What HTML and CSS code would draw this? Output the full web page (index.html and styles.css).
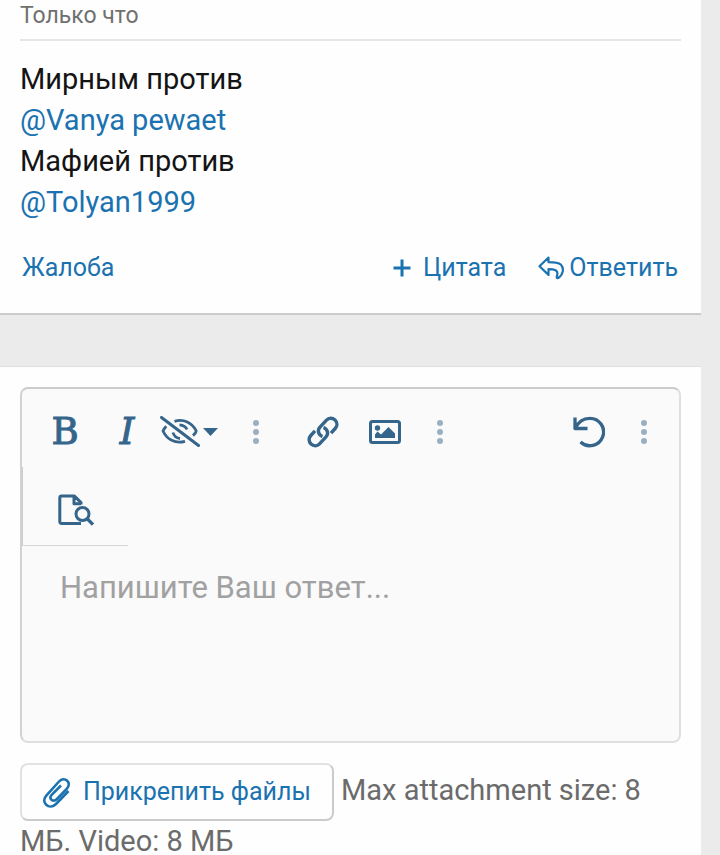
FILE: index.html
```
<!DOCTYPE html>
<html lang="ru">
<head>
  <meta charset="UTF-8">
  <meta name="viewport" content="width=device-width, initial-scale=1">
  <title>Форум</title>
  <link rel="stylesheet" href="styles.css">
</head>
<body>
  <article class="block post">
    <header class="post-meta"><time>Только что</time></header>
    <div class="post-text">
      Мирным против<br>
      <a href="#">@Vanya pewaet</a><br>
      Мафией против<br>
      <a href="#">@Tolyan1999</a>
    </div>
    <footer class="post-actions">
      <a href="#">Жалоба</a>
      <div class="post-actions-right">
        <a href="#" class="quote">
          <svg width="18" height="18" viewBox="0 0 18 18"><path d="M9 .5v17M.5 9h17" stroke-width="3"/></svg>
          Цитата
        </a>
        <a href="#" class="reply">
          <svg width="26" height="24" viewBox="0 0 26 24"><path d="M10.500 1.500 1.500 10.200l9 8.700v-5.700c5.500 0 10.500.8 8.500 6.500-.6 1.800-.2 2.800 1.200 2.300 4.800-3 6.300-9.500 2.600-13.500C20 6.200 15.500 6.200 10.500 6.200z" stroke-width="2.200"/></svg>
          Ответить
        </a>
      </div>
    </footer>
  </article>

  <form class="block reply-form">
    <div class="editor">
      <div class="toolbar">
        <div class="group">
          <button type="button" class="tool bold">B</button>
          <button type="button" class="tool italic">I</button>
          <button type="button" class="tool wide" aria-label="Скрытый текст">
            <svg width="40" height="32" viewBox="0 0 40 32">
              <path d="M14.500 5.300C24 2.500 32 7 36.200 14.800c0 1.200-1.400 3.200-3.200 4.800M6.300 10.300C4.600 12 3.500 13.600 3 15c4 8.500 12 13 22 10.300M19.500 8.800c3.500.3 6.500 2.300 7.500 4.700M13 16.500c.8 3.300 3.500 5.500 7 6" stroke-width="2.800"/>
              <path d="M1.500 1.500l37 28" stroke-width="3" stroke-linecap="round"/>
            </svg>
            <svg class="caret" width="15" height="8" viewBox="0 0 15 8"><path d="M0 0h15L7.500 8z"/></svg>
          </button>
          <button type="button" class="tool more" aria-label="Ещё">
            <svg width="6" height="26" viewBox="0 0 6 26"><circle cx="3" cy="4" r="3"/><circle cx="3" cy="13" r="3"/><circle cx="3" cy="22" r="3"/></svg>
          </button>
        </div>
        <div class="group">
          <button type="button" class="tool" aria-label="Ссылка">
            <svg width="32" height="32" viewBox="0 0 32 32">
              <path d="M15.500 20.500c-4-1.500-5.500-6-2.500-9.300l6.500-7c2.300-2.500 6-2.500 8.500-.2s2.500 6 .2 8.500l-4.200 4.700" stroke-width="3.400"/>
              <path d="M16.500 11.500c4 1.500 5.500 6 2.500 9.300l-6.500 7c-2.300 2.500-6 2.500-8.500.2s-2.500-6-.2-8.500l4.200-4.700" stroke-width="3.400"/>
            </svg>
          </button>
          <button type="button" class="tool" aria-label="Изображение">
            <svg width="32" height="24" viewBox="0 0 32 24">
              <rect x="1.500" y="1.500" width="29" height="21" rx="2" stroke-width="3"/>
              <path class="solid" d="M6 18v-3.500l2.500-3 3.500 3 7.500-7.500 6.500 6.500V18z"/>
              <circle class="solid" cx="8.500" cy="8" r="2.700"/>
            </svg>
          </button>
          <button type="button" class="tool more" aria-label="Ещё">
            <svg width="6" height="26" viewBox="0 0 6 26"><circle cx="3" cy="4" r="3"/><circle cx="3" cy="13" r="3"/><circle cx="3" cy="22" r="3"/></svg>
          </button>
        </div>
        <div class="group end">
          <button type="button" class="tool" aria-label="Отменить">
            <svg width="32" height="32" viewBox="0 0 32 32">
              <path d="M2 1.500v11h12.500M2.500 12C5.500 5.500 11 2.300 16.500 2.300A13.700 13.700 0 1 1 7.500 26" stroke-width="3.300"/>
            </svg>
          </button>
          <button type="button" class="tool more" aria-label="Ещё">
            <svg width="6" height="26" viewBox="0 0 6 26"><circle cx="3" cy="4" r="3"/><circle cx="3" cy="13" r="3"/><circle cx="3" cy="22" r="3"/></svg>
          </button>
        </div>
        <div class="group preview">
          <button type="button" class="tool" aria-label="Предпросмотр">
            <svg width="36" height="32" viewBox="0 0 36 32">
              <path d="M23 29.500H3.500c-1 0-1.700-.6-1.700-1.800V4c0-1.200.6-1.900 1.700-1.900H16.500l6.500 6.500v2M16 2.500v7.300H23" stroke-width="3"/>
              <circle cx="24.500" cy="20" r="6.500" stroke-width="3"/>
              <path d="M29.500 25l5.500 5.500" stroke-width="3.300"/>
            </svg>
          </button>
        </div>
      </div>
      <textarea placeholder="Напишите Ваш ответ..." aria-label="Ответ"></textarea>
    </div>
    <div class="attach">
      <button type="button" class="attach-button">
        <svg width="29" height="31" viewBox="0 0 29 31">
          <path d="M26.500 14 14 27c-3 3-7 3.300-9.800.8s-2.500-6.500.3-9.500L17 4.500c2.500-2.700 6-2.800 8.200-.8s2 5.500-.3 8L14.500 22.300c-1.800 1.800-4 1.700-5.200.4s-1.100-3.300.6-5L19 8.500" stroke-width="2.600"/>
        </svg>
        Прикрепить файлы
      </button>
      Max attachment size: 8 МБ. Video: 8 МБ
    </div>
  </form>
</body>
</html>
```
FILE: styles.css
```
* {
  box-sizing: border-box;
}

body {
  margin: 0;
  padding-right: 19px;
  background: #ebebeb;
  font-family: Roboto, "Liberation Sans", sans-serif;
  font-size: 29px;
  line-height: 41px;
  color: #141414;
}

a {
  color: #1a72b0;
  text-decoration: none;
}

svg {
  flex: none;
  fill: none;
  stroke: currentColor;
  stroke-linejoin: round;
}

.block {
  background: #fefefe;
}

.post {
  padding: 0 20px 29px;
  border-bottom: 2px solid #cbcbcb;
}

.post-meta {
  padding-bottom: 7px;
  border-bottom: 2px solid #e6e6e6;
  font-size: 23px;
  line-height: 32px;
  color: #707070;
}

.post-text {
  padding: 18px 0 29px;
}

.post-actions {
  display: flex;
  justify-content: space-between;
  padding: 0 3px 0 2px;
  font-size: 25px;
  line-height: 32px;
}

.post-actions-right {
  display: flex;
  gap: 32px;
}

.quote,
.reply {
  display: flex;
  align-items: center;
  gap: 12px;
}

.reply {
  gap: 5px;
}

.reply-form {
  margin-top: 51px;
  padding: 20px 20px 0;
  border-top: 1px solid #dfdfdf;
}

.editor {
  border: 2px solid #dfdfdf;
  border-top-color: #cbcbcb;
  border-left-color: #d2d2d2;
  border-radius: 8px;
  background: #fafafa;
}

.toolbar {
  display: flex;
  flex-wrap: wrap;
}

.group {
  display: flex;
  padding-left: 12px;
}

.end {
  margin-left: auto;
  padding-right: 11px;
}

.preview {
  padding: 0 21px 0 22px;
  border-left: 1px solid #cbcbcb;
  border-bottom: 1px solid #d6d6d6;
}

.tool {
  display: flex;
  align-items: center;
  justify-content: center;
  width: 62px;
  height: 78px;
  margin: 0;
  padding: 8px 0 0;
  border: 0;
  background: none;
  color: #35658b;
  cursor: pointer;
}

.bold,
.italic {
  font: 37px/42px "DejaVu Serif", serif;
  -webkit-text-stroke: 1px currentColor;
}

.italic {
  font-style: italic;
}

.wide {
  justify-content: flex-start;
  gap: 3px;
  width: 74px;
  padding-left: 2px;
}

.more {
  width: 48px;
  color: #9ab0c2;
}

.caret,
.more svg,
.solid {
  fill: currentColor;
  stroke: none;
}

textarea {
  display: block;
  width: 100%;
  height: 195px;
  padding: 21px 38px;
  border: 0;
  outline: 0;
  background: none;
  font: 31px/41px Roboto, "Liberation Sans", sans-serif;
  color: #141414;
  resize: none;
}

textarea::placeholder {
  color: #a1a1a1;
}

.attach {
  padding-top: 20px;
  color: #6b6b6b;
}

.attach-button {
  display: inline-flex;
  align-items: center;
  gap: 12px;
  height: 58px;
  margin: 0;
  padding: 0 21px 0 20px;
  border: 2px solid #e2e2e2;
  border-right-color: #cbcbcb;
  border-bottom-color: #cbcbcb;
  border-radius: 8px;
  background: #fefefe;
  font: 25px/32px Roboto, "Liberation Sans", sans-serif;
  color: #1a72b0;
  vertical-align: middle;
  cursor: pointer;
}
```
